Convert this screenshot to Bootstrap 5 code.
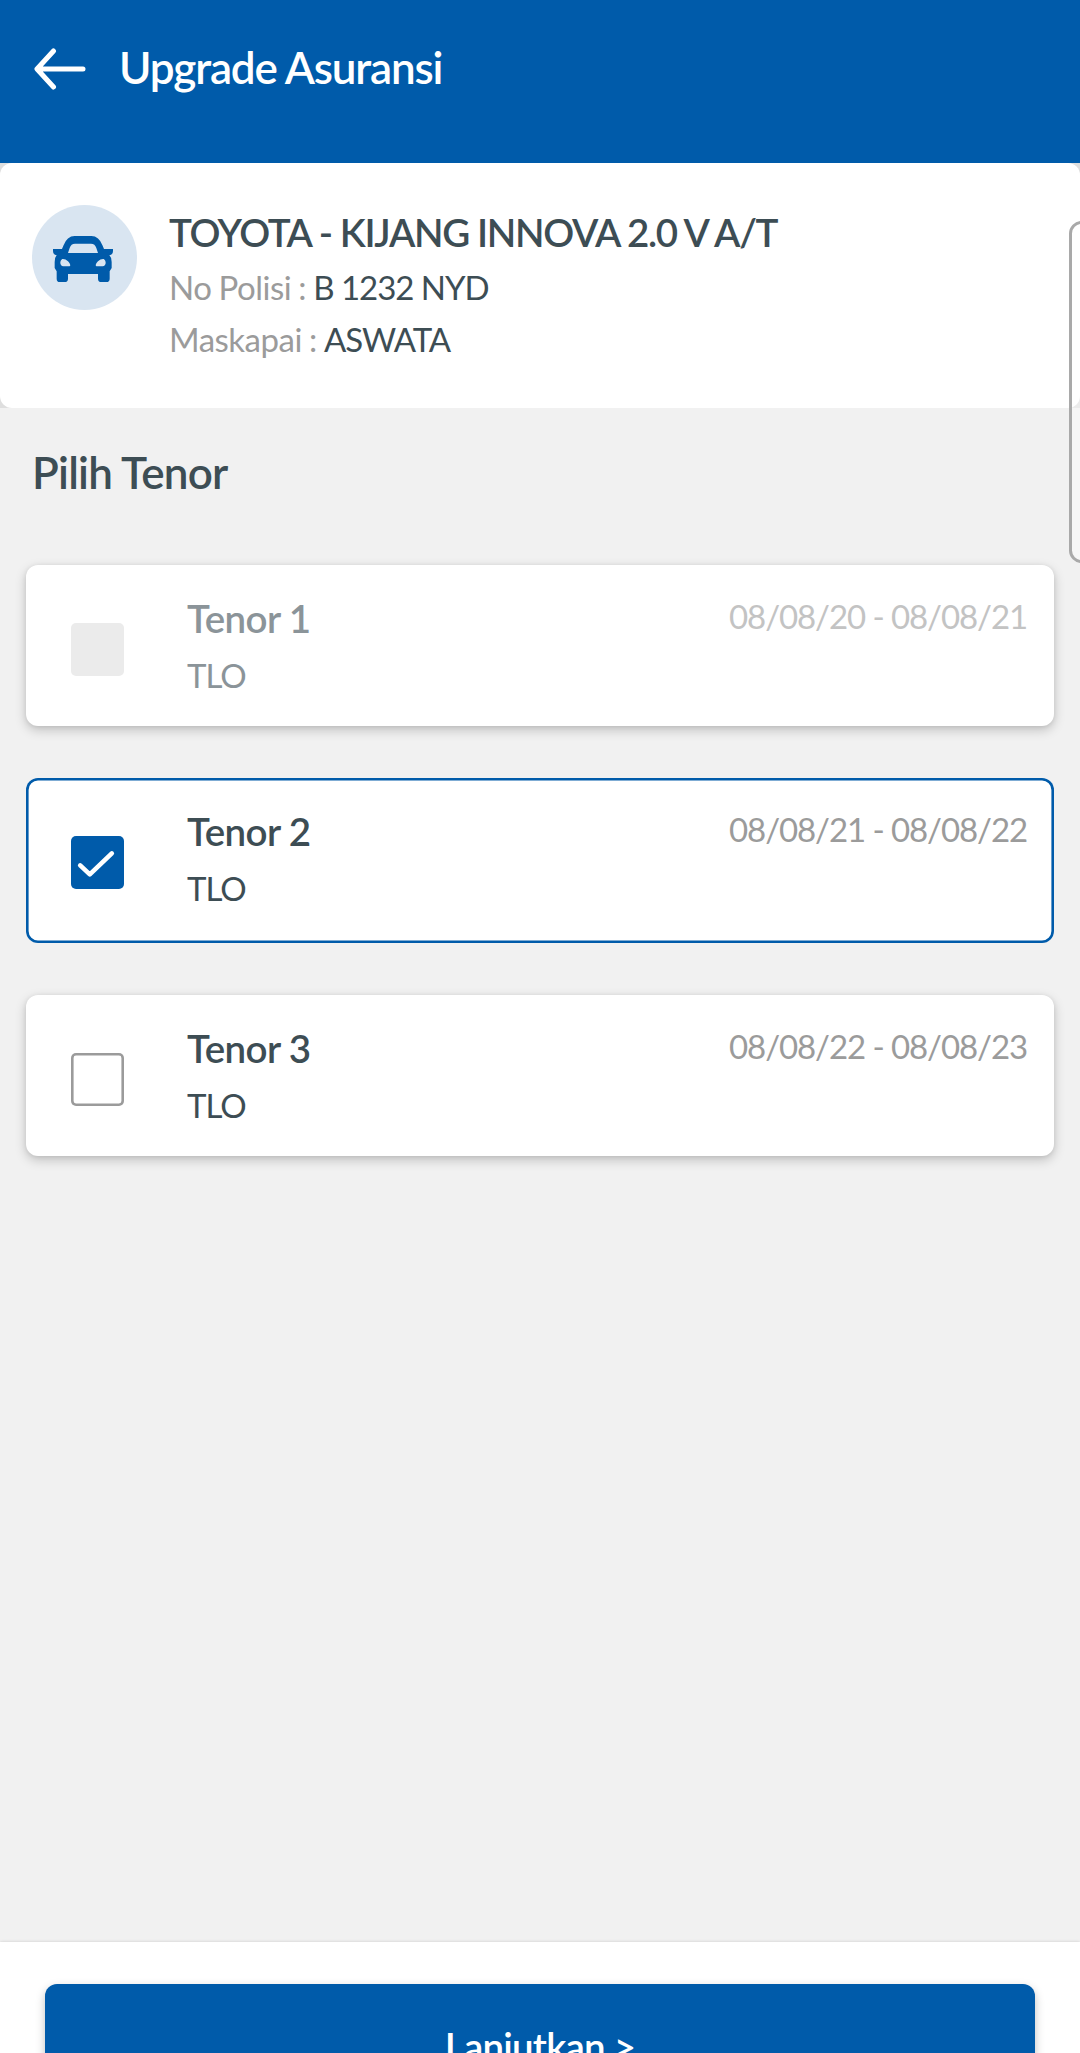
<!DOCTYPE html>
<html lang="id">
<head>
<meta charset="utf-8">
<meta name="viewport" content="width=device-width, initial-scale=1">
<title>Upgrade Asuransi</title>
<link href="https://cdn.jsdelivr.net/npm/bootstrap@5.3.0/dist/css/bootstrap.min.css" rel="stylesheet">
<script src="https://cdn.jsdelivr.net/npm/bootstrap@5.3.0/dist/js/bootstrap.bundle.min.js" defer></script>
<style>
  :root { --brand: #005baa; --ink: #3d4d54; --muted: #9b9b9b; --page: #f1f1f1; }
  body { font-family: Lato, sans-serif; background: var(--page); color: var(--ink); height: 2053px; }
  .screen { height: 2053px; }
  .app-header { background: var(--brand); height: 163px; padding: 40px 34px 0; }
  .back-icon { width: 52px; height: 42px; margin-top: 8px; }
  .app-title { font-size: 44px; line-height: 52px; font-weight: 600; letter-spacing: -1.2px; margin: 1px 0 0 33px; }
  .vehicle-wrap { height: 245px; background: #dedede; }
  .vehicle-card { height: 245px; border-radius: 12px; padding: 42px 32px; }
  .vehicle-icon { width: 105px; height: 105px; background: #d9e5f1; }
  .vehicle-icon svg { margin: 31px 3px 0 0; }
  .vehicle-info { margin: 4px 0 0 32px; }
  .vehicle-name { font-size: 38.5px; line-height: 46px; font-weight: 600; letter-spacing: -1.35px; }
  .vehicle-line { font-size: 33px; line-height: 40px; margin-top: 12px; letter-spacing: -1.02px; }
  .vehicle-label { color: var(--muted); letter-spacing: -.5px; word-spacing: -.8px; }
  .section-title { font-size: 44px; line-height: 52px; font-weight: 600; letter-spacing: -.75px; margin: 38px 0 67px 32px; }
  .tenor-list { padding: 0 26px; }
  .tenor-card { height: 161px; border-radius: 12px; padding: 30px 27px 0 45px; box-shadow: 0 4px 12px rgba(0,0,0,.2), 0 1px 5px rgba(0,0,0,.08); }
  .tenor-card.is-selected { height: 165px; margin: 52px 0; box-shadow: inset 0 0 0 2.6px var(--brand); }
  .tenor-box { width: 53px; height: 53px; border-radius: 5px; margin: 28px 63px 0 0; box-shadow: inset 0 0 0 2.6px var(--muted); }
  .is-selected .tenor-box { background: var(--brand); box-shadow: none; }
  .is-disabled .tenor-box { background: #ebebeb; box-shadow: none; }
  .tenor-name { font-size: 38.5px; line-height: 46px; font-weight: 600; letter-spacing: -.6px; }
  .tenor-kind { font-size: 33px; line-height: 40px; margin-top: 14px; letter-spacing: -1.1px; }
  .tenor-date { font-size: 33px; line-height: 40px; margin-top: 1px; color: var(--muted); letter-spacing: -1.08px; }
  .is-disabled .tenor-name, .is-disabled .tenor-kind { color: #8b9499; }
  .is-disabled .tenor-date { color: #c3c3c3; }
  .bottom-bar { height: 111px; padding: 42px 45px 0; box-shadow: 0 0 3px rgba(0,0,0,.16); }
  .btn-next, .btn-next:hover { background: var(--brand); color: #fff; height: 124px; border: 0; border-radius: 12px; font-size: 38.5px; line-height: 46px; font-weight: 600; letter-spacing: -.78px; box-shadow: 0 4px 10px rgba(0,0,0,.25); }
  .edge-handle { top: 221px; right: -14px; width: 25px; height: 342px; border: 3px solid #a9a9a9; border-radius: 13px; background: rgba(255,255,255,.4); }
</style>
</head>
<body>
<div class="screen position-relative overflow-hidden d-flex flex-column">
  <header class="app-header d-flex align-items-start text-white flex-shrink-0">
    <svg class="back-icon flex-shrink-0" viewBox="0 0 52 42" fill="none" stroke="#fff" stroke-width="5" stroke-linecap="round" stroke-linejoin="round"><path d="M19.5 3 3 21l16.5 18M4 21h45"/></svg>
    <h1 class="app-title">Upgrade Asuransi</h1>
  </header>

  <section class="vehicle-wrap flex-shrink-0">
    <div class="vehicle-card bg-white d-flex align-items-start">
      <div class="vehicle-icon rounded-circle d-flex justify-content-center flex-shrink-0">
        <svg width="60" height="46" viewBox="0 0 180 138"><path fill="#005baa" fill-rule="evenodd" d="M0 39H27L31 29Q42 0 65 0H115Q138 0 149 29L153 39H180Q181 56 172 57H169Q176 64 176 78V96L170 106V128Q170 138 160 138H145Q135 138 135 128V114H45V128Q45 138 35 138H20Q11 138 11 128V106L5 96V78Q5 64 11 57H8Q-1 56 0 39ZM45 51H135L130 36Q126 23 114 23H66Q54 23 50 36ZM28 69C20 73 19 90 31 91H48C55 90 51 82 45 76Q37 68 28 69ZM152 69Q143 68 135 76C129 82 125 90 132 91H149C161 90 160 73 152 69Z"/></svg>
      </div>
      <div class="vehicle-info text-nowrap">
        <div class="vehicle-name">TOYOTA - KIJANG INNOVA 2.0 V A/T</div>
        <div class="vehicle-line"><span class="vehicle-label">No Polisi : </span>B 1232 NYD</div>
        <div class="vehicle-line"><span class="vehicle-label">Maskapai : </span>ASWATA</div>
      </div>
    </div>
  </section>

  <main class="flex-grow-1">
    <h2 class="section-title">Pilih Tenor</h2>
    <div class="tenor-list">
      <div class="tenor-card is-disabled bg-white d-flex align-items-start">
        <div class="tenor-box flex-shrink-0"></div>
        <div class="flex-grow-1">
          <div class="tenor-name">Tenor 1</div>
          <div class="tenor-kind">TLO</div>
        </div>
        <div class="tenor-date">08/08/20 - 08/08/21</div>
      </div>
      <div class="tenor-card is-selected bg-white d-flex align-items-start">
        <div class="tenor-box flex-shrink-0 d-flex align-items-center justify-content-center">
          <svg class="flex-shrink-0" width="53" height="53" viewBox="0 0 53 53" fill="none" stroke="#fff" stroke-width="4.6" stroke-linecap="round" stroke-linejoin="round"><path d="m9.2 29.4 9.6 9L40.8 17.4"/></svg>
        </div>
        <div class="flex-grow-1">
          <div class="tenor-name">Tenor 2</div>
          <div class="tenor-kind">TLO</div>
        </div>
        <div class="tenor-date">08/08/21 - 08/08/22</div>
      </div>
      <div class="tenor-card bg-white d-flex align-items-start">
        <div class="tenor-box flex-shrink-0"></div>
        <div class="flex-grow-1">
          <div class="tenor-name">Tenor 3</div>
          <div class="tenor-kind">TLO</div>
        </div>
        <div class="tenor-date">08/08/22 - 08/08/23</div>
      </div>
    </div>
  </main>

  <footer class="bottom-bar bg-white flex-shrink-0">
    <button type="button" class="btn btn-next w-100">Lanjutkan &gt;</button>
  </footer>

  <div class="edge-handle position-absolute"></div>
</div>
</body>
</html>
